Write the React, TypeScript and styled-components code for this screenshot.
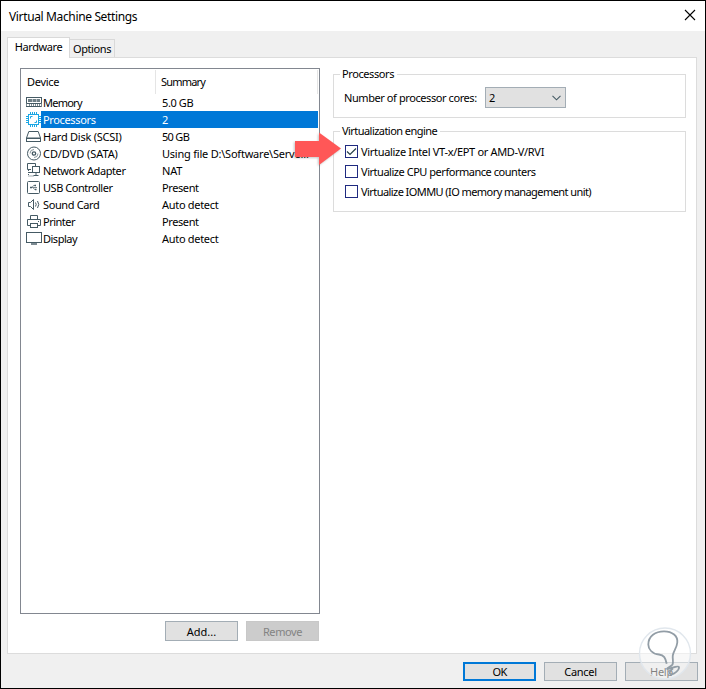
import React from 'react';
import styled, { createGlobalStyle, css } from 'styled-components';

const Global = createGlobalStyle`
  * { box-sizing: border-box; }
  body { margin: 0; font: 11px/17px "Noto Sans", "DejaVu Sans", sans-serif; color: #000; }
`;

const Window = styled.div`
  position: relative;
  width: 706px;
  height: 689px;
  border: 1px solid #000;
  background: #f0f0f0;
  display: flex;
  flex-direction: column;
  overflow: hidden;
`;

const TitleBar = styled.header`
  height: 30px;
  flex: none;
  background: #fff;
  display: flex;
  align-items: center;
  justify-content: space-between;
  padding: 0 9px 0 8px;
  font-size: 12px;
  svg { margin-top: -2px; }
`;

const Tabs = styled.nav`
  display: flex;
  align-items: flex-end;
  height: 26px;
  flex: none;
  padding-left: 6px;
`;

const Tab = styled.div<{ $active?: boolean }>`
  border: 1px solid #d9d9d9;
  border-bottom: 0;
  text-align: center;
  white-space: nowrap;
  ${p =>
    p.$active
      ? css`width: 63px; height: 21px; background: #fff; margin-bottom: -1px; z-index: 1; line-height: 18px;`
      : css`width: 45px; height: 18px; background: #f0f0f0; border-left: 0; line-height: 18px;`}
`;

const Panel = styled.main`
  margin-left: 6px;
  width: 690px;
  height: 597px;
  flex: none;
  border: 1px solid #dcdcdc;
  background: #fff;
  padding: 10px 10px 0 12px;
  display: flex;
  justify-content: space-between;
`;

const DeviceColumn = styled.section`
  width: 300px;
`;

const DeviceList = styled.div`
  height: 546px;
  border: 1px solid #828790;
  padding: 1px 1px 0 1px;
`;

const ListHeader = styled.div`
  display: flex;
  height: 24px;
  line-height: 24px;
`;

const HeaderCell = styled.div<{ $width: number }>`
  width: ${p => p.$width}px;
  border-right: 1px solid #e5e5e5;
  padding-left: 5px;
`;

const Row = styled.div<{ $selected?: boolean }>`
  display: flex;
  height: 17px;
  padding-left: 3px;
  color: ${p => (p.$selected ? '#fff' : '#000')};
  svg { flex: none; width: 17px; height: 17px; }
`;

const RowBody = styled.div<{ $selected?: boolean }>`
  flex: 1;
  display: flex;
  min-width: 0;
  margin-left: -1px;
  padding-left: 2px;
  background: ${p => (p.$selected ? '#0078d7' : 'transparent')};
`;

const DeviceName = styled.span`
  width: 119px;
  flex: none;
  white-space: nowrap;
`;

const Text = styled.span<{ $ls?: number }>`
  letter-spacing: ${p => p.$ls ?? 0}px;
  white-space: nowrap;
`;

const ListActions = styled.div`
  display: flex;
  justify-content: flex-end;
  gap: 8px;
  padding: 7px 1px 0 0;
`;

const Button = styled.button<{ $primary?: boolean; $muted?: boolean; $height?: number }>`
  width: 73px;
  height: ${p => p.$height ?? 19}px;
  padding: 0;
  font: inherit;
  line-height: 15px;
  border-radius: 0;
  border: ${p => (p.$primary ? '2px solid #0078d7' : '1px solid #a3adb5')};
  background: #e1e1e1;
  color: #000;
  ${p => p.$muted && css`background: #ccc; border-color: #c8c8c8; color: #838383;`}
`;

const Settings = styled.section`
  width: 353px;
  padding-top: 6px;
`;

const Group = styled.div<{ $height: number }>`
  height: ${p => p.$height}px;
  border: 1px solid #dcdcdc;
  margin-bottom: 13px;
`;

const Legend = styled.div`
  width: max-content;
  height: 14px;
  line-height: 14px;
  margin: -8px 0 0 6px;
  padding: 0 3px 0 2px;
  background: #fff;
`;

const Field = styled.div`
  display: flex;
  align-items: center;
  justify-content: space-between;
  width: 222px;
  margin: 6px 0 0 10px;
`;

const Select = styled.div`
  width: 81px;
  height: 21px;
  border: 1px solid #a3adb5;
  background: #e1e1e1;
  display: flex;
  align-items: center;
  justify-content: space-between;
  padding: 0 4px 0 3px;
`;

const Option = styled.label`
  display: flex;
  align-items: center;
  height: 20px;
  margin-left: 11px;
  gap: 3px;
`;

const Options = styled.div`
  padding-top: 3px;
`;

const Box = styled.span`
  width: 13px;
  height: 13px;
  border: 1px solid #1f2a80;
  background: #fff;
  display: flex;
`;

const Footer = styled.footer`
  display: flex;
  justify-content: flex-end;
  gap: 8px;
  padding: 8px 7px 0 0;
`;

const Arrow = styled.svg`
  position: absolute;
  left: 290px;
  top: 126px;
  filter: drop-shadow(-1px 1px 1px rgba(90, 90, 90, 0.35));
`;

const Watermark = styled.svg`
  position: absolute;
  left: 637px;
  top: 626px;
`;

const Icon = ({ children }: { children: React.ReactNode }) => (
  <svg viewBox="0 0 17 17" fill="none" stroke="#455a64" strokeWidth="1">
    {children}
  </svg>
);

const icons = {
  memory: (
    <Icon>
      <rect x="1.5" y="3.5" width="15" height="6" />
      <path d="M3 6.5h4M7.500 6.5h3.500M11.500 6.5h3.500" strokeWidth="3" stroke="#6f7f86" />
      <path d="M1.5 9.5v3h15v-3M4.5 10v2M6.5 10v2M8.5 10v2M10.5 10v2M12.5 10v2M14.5 10v2" stroke="#7f8c92" />
      <path d="M1 12.5h15.500" />
    </Icon>
  ),
  cpu: (
    <Icon>
      <g stroke="#1ba7e5">
        <rect x="3.5" y="3.5" width="10" height="10" fill="#fff" />
        <path d="M5.5 1v2M7.5 1v2M9.5 1v2M11.5 1v2M5.5 14v2M7.5 14v2M9.5 14v2M11.5 14v2M1 5.5h2M1 7.5h2M1 9.5h2M1 11.5h2M14 5.5h2M14 7.5h2M14 9.5h2M14 11.5h2" />
        <path d="M5.500 7.500V5.5h2M9.500 11.5h2v-2" />
      </g>
    </Icon>
  ),
  disk: (
    <Icon>
      <path d="M3.8 3.5h9.4l2.3 6.5H1.5z" fill="#fff" />
      <rect x="1.5" y="10.5" width="14" height="3" />
    </Icon>
  ),
  cd: (
    <Icon>
      <circle cx="9" cy="8.5" r="6.5" />
      <circle cx="9" cy="8.5" r="1.7" strokeWidth="1.3" />
      <path d="M5 8.5a4 4 0 0 1 4-4M13 8.5a4 4 0 0 1-4 4" stroke="#8c999f" />
    </Icon>
  ),
  network: (
    <Icon>
      <path d="M6 7.5H2.5v-6h8V4M4 10.5h3" />
      <rect x="7.5" y="4.5" width="7" height="6" fill="#fff" />
      <path d="M11 11v2M8.5 13.5h5" />
      <path d="M3.5 8v6H9" strokeDasharray="1 1" />
    </Icon>
  ),
  usb: (
    <Icon>
      <rect x="2.5" y="2.5" width="12" height="12" rx="1" />
      <path d="M5 8.5h7M7 8.500l1.500-2H10M8 8.500l1.500 2H11" stroke="#7b8a91" />
      <path d="M5 8.5h2M9.500 6.5h1.5M10 10.5h1.5" strokeWidth="1.5" />
    </Icon>
  ),
  sound: (
    <Icon>
      <path d="M3.5 6.5h2l3-3v10l-3-3h-2z" />
      <path d="M10.5 6.5q1.4 2 0 4M12.5 5q2.5 3.5 0 7" />
    </Icon>
  ),
  printer: (
    <Icon>
      <path d="M5.5 6V2.5h7V6M5 12.5H2.5v-6h13v6H13M13 8.5h1" />
      <rect x="5.5" y="10.5" width="7" height="4" fill="#fff" />
    </Icon>
  ),
  display: (
    <Icon>
      <rect x="1.5" y="2.5" width="15" height="10" />
      <path d="M6 14h6" strokeWidth="1.4" />
    </Icon>
  ),
};

const devices: { icon: keyof typeof icons; name: string; summary: string; ls: number; ls2: number }[] = [
  { icon: 'memory', name: 'Memory', summary: '5.0 GB', ls: -0.75, ls2: -0.4 },
  { icon: 'cpu', name: 'Processors', summary: '2', ls: -0.35, ls2: 0 },
  { icon: 'disk', name: 'Hard Disk (SCSI)', summary: '50 GB', ls: -0.24, ls2: -0.7 },
  { icon: 'cd', name: 'CD/DVD (SATA)', summary: 'Using file D:\\Software\\Serve...', ls: -0.07, ls2: -0.22 },
  { icon: 'network', name: 'Network Adapter', summary: 'NAT', ls: -0.4, ls2: -0.2 },
  { icon: 'usb', name: 'USB Controller', summary: 'Present', ls: -0.45, ls2: -0.4 },
  { icon: 'sound', name: 'Sound Card', summary: 'Auto detect', ls: -0.38, ls2: -0.3 },
  { icon: 'printer', name: 'Printer', summary: 'Present', ls: -0.5, ls2: -0.4 },
  { icon: 'display', name: 'Display', summary: 'Auto detect', ls: -0.5, ls2: -0.3 },
];

const engineOptions = [
  { label: 'Virtualize Intel VT-x/EPT or AMD-V/RVI', checked: true, ls: -0.32 },
  { label: 'Virtualize CPU performance counters', checked: false, ls: -0.47 },
  { label: 'Virtualize IOMMU (IO memory management unit)', checked: false, ls: -0.57 },
];

export default function App() {
  return (
    <>
      <Global />
      <Window>
        <TitleBar>
          <Text $ls={-0.36}>Virtual Machine Settings</Text>
          <svg width="12" height="12" stroke="#000" strokeWidth="1.1">
            <path d="M1 1l10 10M11 1L1 11" />
          </svg>
        </TitleBar>
        <Tabs>
          <Tab $active><Text $ls={-0.42}>Hardware</Text></Tab>
          <Tab><Text $ls={-0.4}>Options</Text></Tab>
        </Tabs>
        <Panel>
          <DeviceColumn>
            <DeviceList>
              <ListHeader>
                <HeaderCell $width={134}><Text $ls={-0.3}>Device</Text></HeaderCell>
                <HeaderCell $width={162}><Text $ls={-0.8}>Summary</Text></HeaderCell>
              </ListHeader>
              {devices.map((d, i) => (
                <Row key={d.name} $selected={i === 1}>
                  {icons[d.icon]}
                  <RowBody $selected={i === 1}>
                    <DeviceName><Text $ls={d.ls}>{d.name}</Text></DeviceName>
                    <Text $ls={d.ls2}>{d.summary}</Text>
                  </RowBody>
                </Row>
              ))}
            </DeviceList>
            <ListActions>
              <Button $height={20}><Text>Add...</Text></Button>
              <Button $height={20} $muted><Text $ls={-0.4}>Remove</Text></Button>
            </ListActions>
          </DeviceColumn>
          <Settings>
            <Group $height={44}>
              <Legend><Text $ls={-0.4}>Processors</Text></Legend>
              <Field>
                <Text $ls={-0.42}>Number of processor cores:</Text>
                <Select>
                  2
                  <svg width="9" height="6" fill="none" stroke="#455a64" strokeWidth="1.1">
                    <path d="M.5.8l4 4 4-4" />
                  </svg>
                </Select>
              </Field>
            </Group>
            <Group $height={81}>
              <Legend><Text $ls={-0.55}>Virtualization engine</Text></Legend>
              <Options>
                {engineOptions.map(o => (
                  <Option key={o.label}>
                    <Box>
                      {o.checked && (
                        <svg width="11" height="11" fill="none" stroke="#263f48" strokeWidth="1.2">
                          <path d="M1 5.5l3 3 6-6" />
                        </svg>
                      )}
                    </Box>
                    <Text $ls={o.ls}>{o.label}</Text>
                  </Option>
                ))}
              </Options>
            </Group>
          </Settings>
        </Panel>
        <Footer>
          <Button $primary><Text $ls={-0.6}>OK</Text></Button>
          <Button><Text $ls={-0.3}>Cancel</Text></Button>
          <Button><Text $ls={-0.3}>Help</Text></Button>
        </Footer>
        <Arrow width="54" height="44">
          <path d="M4 14h24V5.500L50 21.500 28 38V30H4z" fill="#ff5757" />
        </Arrow>
        <Watermark width="54" height="54">
          <circle cx="27" cy="26.5" r="25.5" fill="#fff" fillOpacity=".5" stroke="#e1e7ed" strokeWidth="1.4" />
          <path
            d="M28.700 36.700C27.500 31 26 28 21 27.500C14 27 10.300 22 10.300 17.500C10.300 9 17.500 4.300 26 4.300C34.500 4.300 40 9 39.300 15.500C38.800 21 35.500 24 34.800 28.500C34.300 32 35.800 35 34.500 37.500C33 40 29.300 40 29 41.700C29 43.500 40 37.500 41 40C41.500 43 36 47.700 33 47.200C30.500 46.700 32 43.500 35 41.500"
            fill="none"
            stroke="#929da6"
            strokeWidth="1.8"
          />
        </Watermark>
      </Window>
    </>
  );
}
